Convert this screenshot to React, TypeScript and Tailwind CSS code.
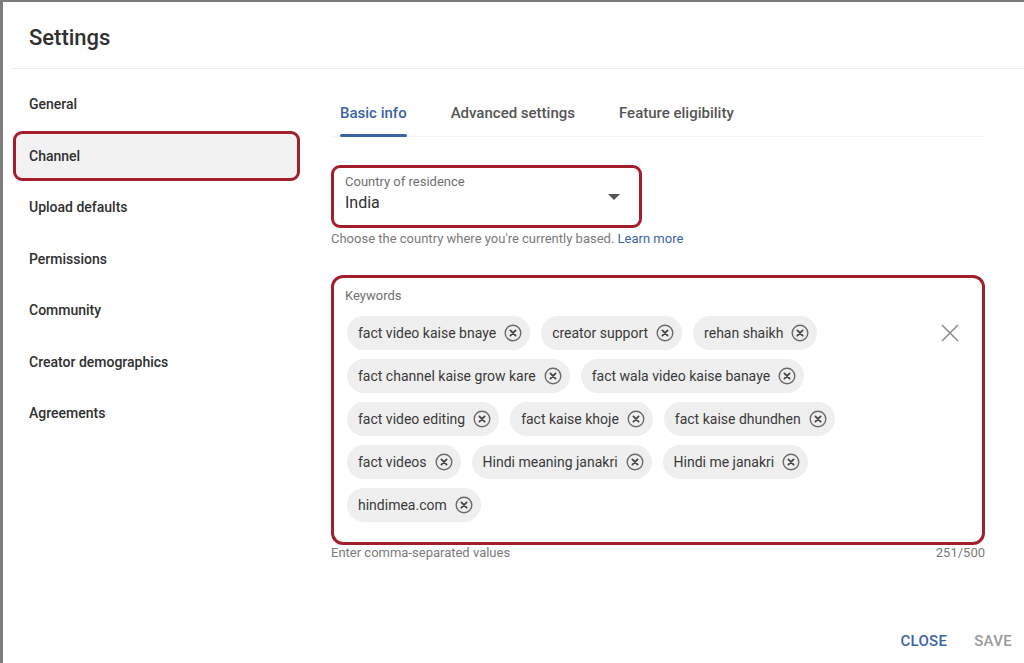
import React from 'react';

const navItems = [
  'General',
  'Channel',
  'Upload defaults',
  'Permissions',
  'Community',
  'Creator demographics',
  'Agreements',
];

const keywords = [
  'fact video kaise bnaye',
  'creator support',
  'rehan shaikh',
  'fact channel kaise grow kare',
  'fact wala video kaise banaye',
  'fact video editing',
  'fact kaise khoje',
  'fact kaise dhundhen',
  'fact videos',
  'Hindi meaning janakri',
  'Hindi me janakri',
  'hindimea.com',
];

const ChipRemove = () => (
  <svg width="18" height="18" viewBox="0 0 18 18" fill="none">
    <circle cx="9" cy="9" r="7.8" stroke="#6b6b6b" strokeWidth="1.4" />
    <path d="M6.4 6.4 L11.6 11.6 M11.6 6.4 L6.4 11.6" stroke="#444" strokeWidth="1.8" strokeLinecap="round" />
  </svg>
);

const Chip: React.FC<{ label: string }> = ({ label }) => (
  <div className="h-[34px] rounded-full bg-[#efefef] pl-[11px] pr-[8px] flex items-center gap-[8px] text-[14px] text-[#3a3a3a]">
    <span>{label}</span>
    <ChipRemove />
  </div>
);

const App: React.FC = () => {
  return (
    <div className="w-[1024px] h-[663px] bg-[#7c7c7c] pl-[3px] pt-[2px] overflow-hidden" style={{ fontFamily: 'Roboto, "Liberation Sans", sans-serif' }}>
      <div className="bg-white h-full flex flex-col">
        {/* Header */}
        <div className="h-[67px] flex items-center pt-[4px] pl-[17px] border-b border-[#ececec] ml-[9px]">
          <h1 className="text-[22px] font-medium text-[#303030]">Settings</h1>
        </div>

        <div className="flex flex-1">
          {/* Sidebar */}
          <aside className="w-[328px] pt-[10px]">
            {navItems.map((item) =>
              item === 'Channel' ? (
                <div key={item} className="h-[51.5px] flex items-center">
                  <div className="ml-[10px] w-[287px] h-[50px] rounded-[9px] border-[3px] border-[#a31f2b] bg-[#f2f2f2] flex items-center pl-[13px] text-[14px] font-medium text-[#303030]">
                    {item}
                  </div>
                </div>
              ) : (
                <div key={item} className="h-[51.5px] flex items-center pl-[26px] text-[14px] font-medium text-[#303030]">
                  {item}
                </div>
              )
            )}
          </aside>

          {/* Main */}
          <main className="w-[654px]">
            <div className="h-[68px] flex items-start gap-[44px] pl-[9px] border-b border-[#f4f4f4]">
              <div className="pt-[34px] flex flex-col">
                <span className="h-[20px] leading-[20px] text-[15px] font-medium text-[#3b63a6]">Basic info</span>
                <span className="mt-[11px] h-[3px] rounded-full bg-[#3b63a6]" />
              </div>
              <div className="pt-[34px] h-[20px] leading-[20px] text-[15px] font-medium text-[#555] box-content">
                Advanced settings
              </div>
              <div className="pt-[34px] h-[20px] leading-[20px] text-[15px] font-medium text-[#555] box-content">
                Feature eligibility
              </div>
            </div>

            {/* Country */}
            <div className="mt-[28px] w-[311px] h-[63px] rounded-[9px] border-[3px] border-[#a31f2b] pl-[11px] pr-[19px] pt-[6px] flex">
              <div className="flex-1">
                <div className="text-[13px] leading-[16px] text-[#707070]">Country of residence</div>
                <div className="text-[16px] leading-[22px] mt-[2px] text-[#303030]">India</div>
              </div>
              <svg width="12" height="6" viewBox="0 0 12 6" className="mt-[20px]">
                <path d="M0 0 L12 0 L6 6 Z" fill="#555" />
              </svg>
            </div>
            <p className="mt-[3px] text-[13px] leading-[16px] text-[#7a7a7a]">
              Choose the country where you're currently based. <span className="text-[#3b63a6]">Learn more</span>
            </p>

            {/* Keywords */}
            <div className="mt-[28px] h-[270px] rounded-[12px] border-[3px] border-[#a31f2b] pl-[13px] pr-[23px] pt-[10px]">
              <div className="text-[13px] leading-[16px] text-[#707070] -ml-[2px]">Keywords</div>
              <div className="flex mt-[12px]">
                <div className="flex-1 flex flex-wrap gap-x-[11px] gap-y-[9px] pr-[50px]">
                  {keywords.map((k) => (
                    <Chip key={k} label={k} />
                  ))}
                </div>
                <div className="h-[34px] flex items-center">
                  <svg width="18" height="18" viewBox="0 0 18 18">
                    <path d="M1 1 L17 17 M17 1 L1 17" stroke="#8a8a8a" strokeWidth="1.5" />
                  </svg>
                </div>
              </div>
            </div>
            <div className="flex justify-between text-[13px] leading-[16px] text-[#7a7a7a]">
              <span>Enter comma-separated values</span>
              <span>251/500</span>
            </div>
          </main>
        </div>

        {/* Footer */}
        <div className="h-[48px] flex items-center justify-end gap-[27px] pt-[4px] pr-[12px] text-[15px] font-medium tracking-[0.3px]">
          <span className="text-[#3b63a6]">CLOSE</span>
          <span className="text-[#9a9a9a]">SAVE</span>
        </div>
      </div>
    </div>
  );
};

export default App;
